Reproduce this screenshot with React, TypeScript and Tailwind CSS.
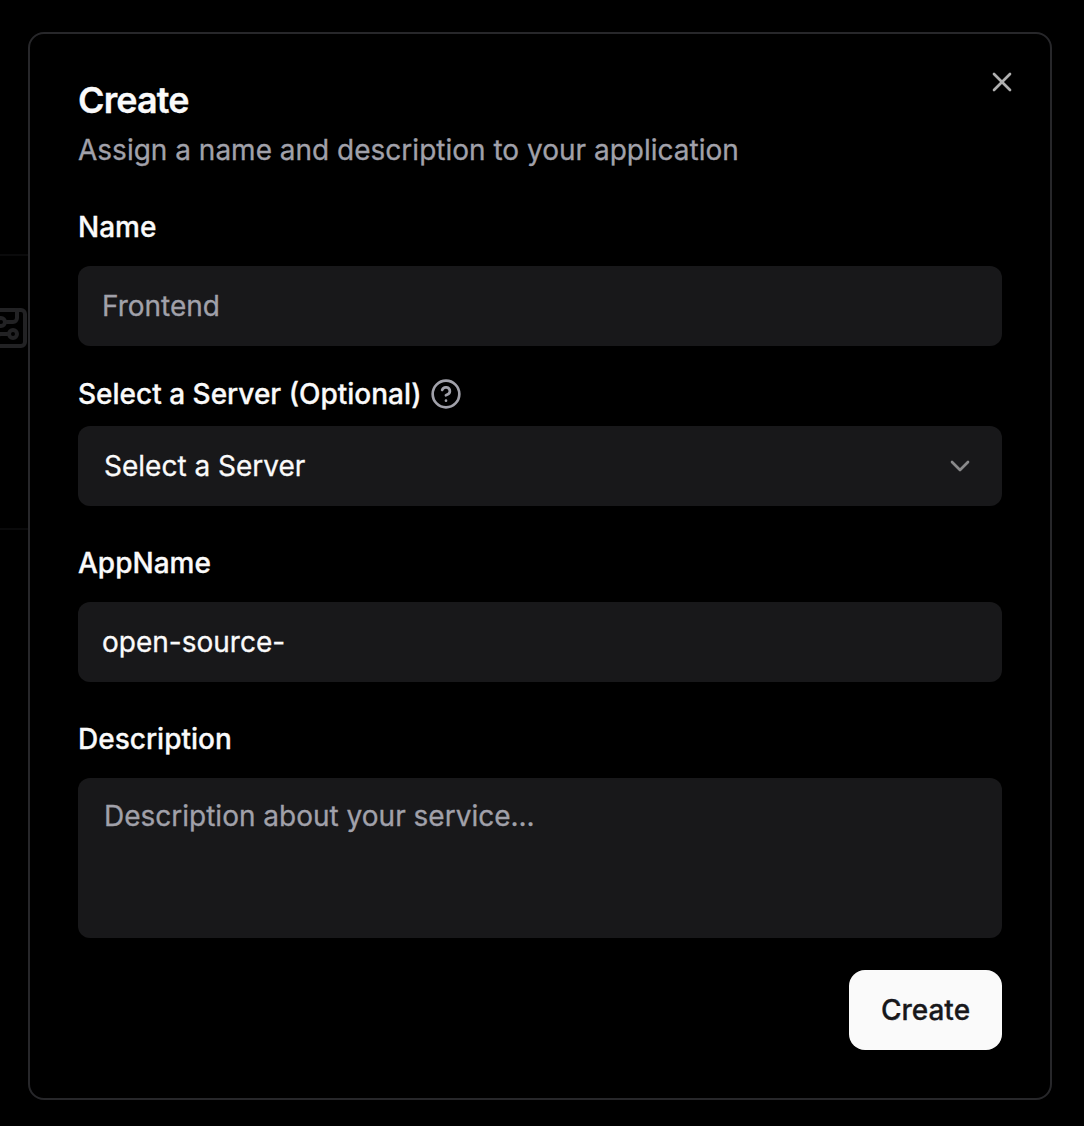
import React from "react";
import { ChevronDown, CircleHelp, X } from "lucide-react";

const labelClass = "text-[28px] leading-7 font-medium text-[#fafafa]";
const fieldClass =
  "block w-full rounded-xl border-0 bg-[#18181a] text-[28px] leading-10 text-[#fafafa] placeholder:text-[#a1a1aa] outline-none";

export default function App() {
  return (
    <div className="relative h-[1126px] w-[1084px] overflow-hidden bg-black pt-8 pl-7 font-['Inter',sans-serif] [-webkit-text-stroke:0.3px]">
      {/* page behind the dialog */}
      <div className="absolute top-[254px] -left-4 h-[276px] w-20 border-y-2 border-[#0a0a0b]" />
      <svg
        className="absolute top-[304px] left-[-17px]"
        width="48"
        height="48"
        viewBox="0 0 24 24"
        fill="none"
        stroke="#222224"
        strokeWidth="2"
        strokeLinecap="round"
        strokeLinejoin="round"
      >
        <rect width="18" height="18" x="3" y="3" rx="2" />
        <path d="M11 9h4a2 2 0 0 0 2-2V3" />
        <circle cx="9" cy="9" r="2" />
        <path d="M7 21v-4a2 2 0 0 1 2-2h4" />
        <circle cx="15" cy="15" r="2" />
      </svg>

      <div className="relative h-[1068px] w-[1024px] rounded-2xl border-2 border-[#27272a] bg-black p-12">
        <button className="absolute top-8 right-8 text-[#fafafa] opacity-70">
          <X size={32} />
        </button>

        <h2 className="text-4xl leading-9 font-semibold tracking-[-0.025em] text-[#fafafa]">Create</h2>
        <p className="mt-3 text-[28px] leading-10 text-[#a1a1aa]">
          Assign a name and description to your application
        </p>

        <form className="mt-[43px]">
          <div>
            <label className={`${labelClass} block`}>Name</label>
            <input className={`${fieldClass} mt-[25px] h-20 px-6`} placeholder="Frontend" />
          </div>

          <div className="mt-8">
            <div className={`${labelClass} flex h-8 items-center gap-2`}>
              Select a Server (Optional)
              <CircleHelp size={32} className="text-[#a1a1aa]" />
            </div>
            <button type="button" className={`${fieldClass} mt-4 flex h-20 items-center justify-between px-[26px]`}>
              Select a Server
              <ChevronDown size={32} className="opacity-50" />
            </button>
          </div>

          <div className="mt-[43px]">
            <label className={`${labelClass} block`}>AppName</label>
            <input className={`${fieldClass} mt-[25px] h-20 px-6`} defaultValue="open-source-" />
          </div>

          <div className="mt-[43px]">
            <label className={`${labelClass} block`}>Description</label>
            <textarea
              className={`${fieldClass} mt-[25px] h-40 resize-none px-[26px] py-[18px]`}
              placeholder="Description about your service..."
            />
          </div>

          <div className="mt-8 flex justify-end">
            <button
              type="button"
              className="h-20 w-[153px] rounded-2xl bg-[#fafafa] text-[28px] leading-10 font-medium text-[#18181b]"
            >
              Create
            </button>
          </div>
        </form>
      </div>
    </div>
  );
}
